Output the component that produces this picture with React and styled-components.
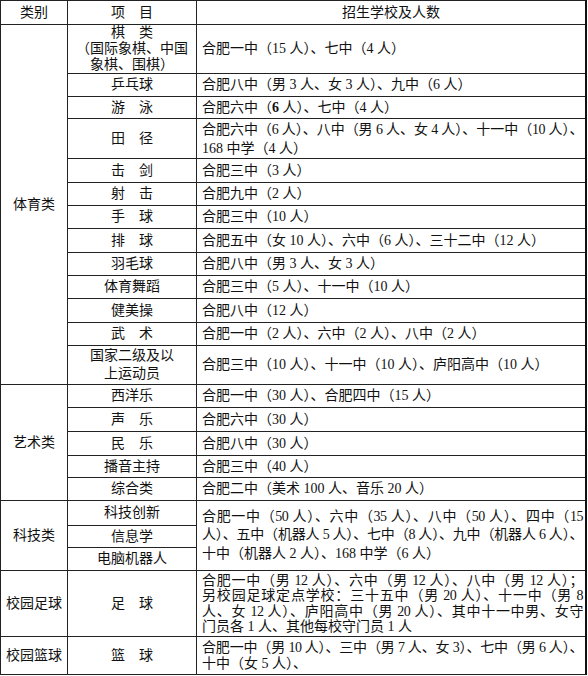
import React from 'react';
import styled, { createGlobalStyle } from 'styled-components';

const GlobalStyle = createGlobalStyle`
  html, body {
    margin: 0;
    padding: 0;
    background: #ffffff;
  }
  body {
    font-family: "Liberation Serif", "Noto Sans CJK SC", serif;
    color: #111;
  }
`;

const Table = styled.table`
  width: 587px;
  border-collapse: collapse;
  table-layout: fixed;
  font-size: 14px;
  border-top: 1px solid #111;
  border-left: 1px solid #111;
  border-right: 2px solid #111;
  border-bottom: 1px solid #111;
`;

const Col = styled.col`
  width: ${(p) => (p.$w ? `${p.$w}px` : 'auto')};
`;

const Row = styled.tr`
  height: ${(p) => p.$h}px;
`;

const Cell = styled.td`
  border: 1px solid #222;
  padding: ${(p) => (p.$left ? '0 2px 0 5px' : '0 2px')};
  text-align: ${(p) => (p.$left ? 'left' : 'center')};
  vertical-align: middle;
  line-height: ${(p) => p.$lh || 16}px;
  white-space: nowrap;
  overflow: hidden;
`;

const HeadCell = styled(Cell).attrs({ as: 'th' })`
  font-weight: normal;
`;

// justified lines are squeezed a little first, then spread to the cell edge
const Line = styled.span`
  display: block;
  text-align: ${(p) => (p.$center ? 'center' : 'left')};
  text-align-last: ${(p) => (p.$justify ? 'justify' : 'auto')};
  letter-spacing: ${(p) => (p.$justify ? '-0.5px' : 'normal')};
`;

const Strong = styled.b`
  font-weight: bold;
`;

const sports = [
  { item: '乒乓球', school: '合肥八中（男 3 人、女 3 人）、九中（6 人）', h: 23 },
  { item: '游　泳', school: <>合肥六中（<Strong>6</Strong> 人）、七中（4 人）</>, h: 22 },
  {
    item: '田　径',
    lines: ['合肥六中（6 人）、八中（男 6 人、女 4 人）、十一中（10 人）、', '168 中学（4 人）'],
    h: 40,
    lh: 19,
  },
  { item: '击　剑', school: '合肥三中（3 人）', h: 24 },
  { item: '射　击', school: '合肥九中（2 人）', h: 23 },
  { item: '手　球', school: '合肥三中（10 人）', h: 23 },
  { item: '排　球', school: '合肥五中（女 10 人）、六中（6 人）、三十二中（12 人）', h: 24 },
  { item: '羽毛球', school: '合肥八中（男 3 人、女 3 人）', h: 23 },
  { item: '体育舞蹈', school: '合肥三中（5 人）、十一中（10 人）', h: 23 },
  { item: '健美操', school: '合肥八中（12 人）', h: 24 },
  { item: '武　术', school: '合肥一中（2 人）、六中（2 人）、八中（2 人）', h: 23 },
];

const arts = [
  { item: '西洋乐', school: '合肥一中（30 人）、合肥四中（15 人）', h: 23 },
  { item: '声　乐', school: '合肥六中（30 人）', h: 24 },
  { item: '民　乐', school: '合肥八中（30 人）', h: 24 },
  { item: '播音主持', school: '合肥三中（40 人）', h: 22 },
  { item: '综合类', school: '合肥二中（美术 100 人、音乐 20 人）', h: 23 },
];

const SchoolLines = ({ lines }) =>
  lines.map((l, i) => (
    <Line key={i} $justify={i < lines.length - 1}>
      {l}
    </Line>
  ));

export default function App() {
  return (
    <>
      <GlobalStyle />
      <Table>
        <colgroup>
          <Col $w={67} />
          <Col $w={129} />
          <Col />
        </colgroup>
        <tbody>
          <Row $h={24}>
            <HeadCell>类别</HeadCell>
            <HeadCell>项　目</HeadCell>
            <HeadCell>招生学校及人数</HeadCell>
          </Row>

          <Row $h={49}>
            <Cell rowSpan={sports.length + 2}>体育类</Cell>
            <Cell $lh={16}>
              <Line $center>棋　类</Line>
              <Line $center>（国际象棋、中国</Line>
              <Line $center>象棋、围棋）</Line>
            </Cell>
            <Cell $left>合肥一中（15 人）、七中（4 人）</Cell>
          </Row>
          {sports.map((r) => (
            <Row key={r.item} $h={r.h}>
              <Cell>{r.item}</Cell>
              <Cell $left $lh={r.lh}>
                {r.lines ? <SchoolLines lines={r.lines} /> : r.school}
              </Cell>
            </Row>
          ))}
          <Row $h={39}>
            <Cell $lh={18}>
              <Line $center>国家二级及以</Line>
              <Line $center>上运动员</Line>
            </Cell>
            <Cell $left>合肥三中（10 人）、十一中（10 人）、庐阳高中（10 人）</Cell>
          </Row>

          {arts.map((r, i) => (
            <Row key={r.item} $h={r.h}>
              {i === 0 && <Cell rowSpan={arts.length}>艺术类</Cell>}
              <Cell>{r.item}</Cell>
              <Cell $left>{r.school}</Cell>
            </Row>
          ))}

          <Row $h={25}>
            <Cell rowSpan={3}>科技类</Cell>
            <Cell>科技创新</Cell>
            <Cell rowSpan={3} $left $lh={18.5}>
              <SchoolLines
                lines={[
                  '合肥一中（50 人）、六中（35 人）、八中（50 人）、四中（15',
                  '人）、五中（机器人 5 人）、七中（8 人）、九中（机器人 6 人）、',
                  '十中（机器人 2 人）、168 中学（6 人）',
                ]}
              />
            </Cell>
          </Row>
          <Row $h={22}>
            <Cell>信息学</Cell>
          </Row>
          <Row $h={23}>
            <Cell>电脑机器人</Cell>
          </Row>

          <Row $h={66}>
            <Cell>校园足球</Cell>
            <Cell>足　球</Cell>
            <Cell $left $lh={15.5}>
              <SchoolLines
                lines={[
                  '合肥一中（男 12 人）、六中（男 12 人）、八中（男 12 人）；',
                  '另校园足球定点学校：三十五中（男 20 人）、十一中（男 8',
                  '人、女 12 人）、庐阳高中（男 20 人）、其中十一中男、女守',
                  '门员各 1 人、其他每校守门员 1 人',
                ]}
              />
            </Cell>
          </Row>
          <Row $h={38}>
            <Cell>校园篮球</Cell>
            <Cell>篮　球</Cell>
            <Cell $left $lh={16}>
              <SchoolLines
                lines={['合肥一中（男 10 人）、三中（男 7 人、女 3）、七中（男 6 人）、', '十中（女 5 人）、']}
              />
            </Cell>
          </Row>
        </tbody>
      </Table>
    </>
  );
}
